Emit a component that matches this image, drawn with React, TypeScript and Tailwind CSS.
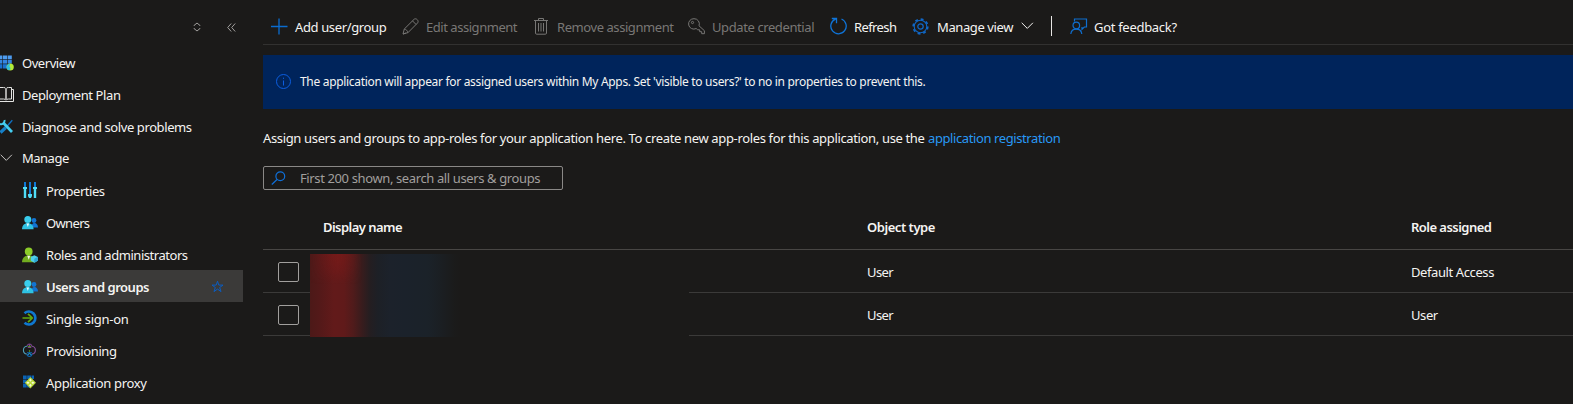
import type { ReactNode } from "react";

type IconProps = { className?: string };

const Grid = () => (
  <svg width="15" height="17" viewBox="0 0 15 17">
    <g fill="#4d9bef">
      <rect x="0" y="1.500" width="2.400" height="3.500" /><rect x="3" y="1.500" width="4" height="3.500" /><rect x="7.600" y="1.500" width="4.200" height="3.500" />
    </g>
    <g fill="#3486e2">
      <rect x="0" y="5.600" width="2.400" height="4" /><rect x="3" y="5.600" width="4" height="4" /><rect x="7.600" y="5.600" width="4.200" height="4" />
    </g>
    <g fill="#1a70cf">
      <rect x="0" y="10.200" width="2.400" height="4.300" /><rect x="3" y="10.200" width="4" height="4.300" />
    </g>
    <circle cx="10.2" cy="13" r="3.600" fill="#b4ec36" />
    <path d="M9.8 9.400a3.600 3.600 0 0 0-1 6.900c2.200-.8 2-2.500 1-3.400-.9-1.200.8-2 0-3.500Z" fill="#32bedd" />
  </svg>
);
const Book = () => (
  <svg width="15" height="18" viewBox="0 0 15 18" fill="none" stroke="#e4e4e2">
    <path d="M0 2.500h3.500q2 0 2.500 1.200Q6.500 2.500 8.500 2.500h3v11.500h-3q-2 0-2.500 1.200Q5.500 14 3.500 14H0" />
    <path d="M6 3.500V15" stroke="#a9a8a6" strokeWidth="2" />
    <path d="M11.500 4.500h2v12H0" />
  </svg>
);
const Tools = () => (
  <svg width="15" height="17" viewBox="0 0 15 17" fill="none">
    <path d="M12.300 2.200 7 8.200" stroke="#0f6fc0" strokeWidth="1.300" />
    <path d="M5.800 9.500.5 14.500" stroke="#1680c8" strokeWidth="3.200" />
    <path d="M3 4.500 12 14" stroke="#45cdf0" strokeWidth="2.700" />
    <path d="M0 6c2 .8 5-1 4.500-4" stroke="#45cdf0" strokeWidth="1.900" />
  </svg>
);
const Chevron = ({ className }: IconProps) => (
  <svg className={className} width="13" height="8" viewBox="0 0 13 8" fill="none" stroke="currentColor"><path d="m.7.800 5.600 5.600L11.900.800" /></svg>
);
const Sliders = () => (
  <svg width="16" height="18" viewBox="0 0 16 18">
    <path d="M2 1h2v6H2zM7 1h2v13H7zM12 1h2v6h-2z" fill="#0f78d4" />
    <path d="M1 6h4v2H4.200V17H1.800V8H1zM6 13h4v2L9 17H7l-1-2zM11 6h4v2h-.800V17h-2.400V8H11z" fill="#50dcf5" />
  </svg>
);
const People = () => (
  <svg width="16" height="16" viewBox="0 0 16 16">
    <circle cx="12" cy="6.500" r="2.400" fill="#1274d2" /><path d="M9 13.500c0-6 7-6 7 0Z" fill="#1274d2" />
    <path d="M0 15.300c0-8.500 11.600-8.500 11.600 0Z" fill="#2fc2e3" /><circle cx="5.800" cy="5.400" r="3.500" fill="#39cdec" />
    <path d="m4.500 9.600 1.300 3.400 1.300-3.400Z" fill="#e8fafd" />
  </svg>
);
const Admin = () => (
  <svg width="16" height="17" viewBox="0 0 16 17">
    <path d="M0 16.300c0-9.500 13.500-9.500 13.500 0Z" fill="#72ad20" /><circle cx="6.700" cy="5.500" r="3.900" fill="#8ccb29" />
    <path d="m5.200 9.800 1.500 4 1.500-4Z" fill="#f2f8e8" />
    <path d="m12.300 9.200 3.500 1.700v3.800l-3.500 2-3.500-2v-3.800Z" fill="#50cfe8" /><path d="m12.300 12.800 3.500-1.900v3.800l-3.500 2Z" fill="#2ba6d4" />
  </svg>
);
const SignOn = () => (
  <svg width="16" height="18" viewBox="0 0 16 18" fill="none">
    <path d="M2.500 4.200A6.500 6.500 0 1 1 2.500 13.800" stroke="#0f78d0" strokeWidth="2.600" />
    <path d="M.5 9h9.500M6 4.800 10.300 9 6 13.200" stroke="#62aa0c" strokeWidth="1.700" />
  </svg>
);
const Provision = () => (
  <svg width="16" height="16" viewBox="0 0 16 16" fill="none" strokeWidth="1.100">
    <path d="M5.300 4.200H4.800C.3 4.800.3 11.500 4.800 12" stroke="#4f9fb8" />
    <path d="M9.700 4.200h.300c4.500.6 4.500 7.300 0 7.800" stroke="#85509c" />
    <path d="M5.300 4.200c-.300-2.800 4.700-2.800 4.400 0" stroke="#76408c" />
    <path d="M4.800 12c.6 3.300 4.800 3.300 5.200 0M5 10.800h5" stroke="#0d66b0" />
    <path d="M7.500 2v2.800M5.800 5.500h3.500" stroke="#7a3e8a" /><path d="M6.200 4.400h2.600M7.500 8.300v1.500" stroke="#58a01a" /><path d="m5.700 13 1.800-1.800L9.300 13" stroke="#1c86c6" />
  </svg>
);
const Proxy = () => (
  <svg width="16" height="16" viewBox="0 0 16 16">
    <path d="M1 1.500h3.700v3.600H1zM5.200 1.500H9v3.600H5.200zM1 5.600h3.700V9.200H1zM1 9.700h3.700v3.800H1zM9.500 1.500H12v3.600H9.500zM5.200 9.700H9v3.800H5.200z" fill="#0b63b4" />
    <path d="m8.400 2.900 5.600 5.800-5.600 5.800-5.600-5.800Z" fill="#b6d738" />
    <path d="m8.400 4.500 1.300 1.700-1.300 1.500-1.300-1.500ZM8.400 9.700l1.300 1.500-1.300 1.700-1.300-1.700ZM4.300 8.700l1.700-1.300 1.500 1.300L6 10ZM9.300 8.700l1.500-1.300 1.700 1.300-1.700 1.300Z" fill="#f4fbd4" />
  </svg>
);
const Plus = () => (
  <svg width="17" height="17" viewBox="0 0 17 17" stroke="#0a6cd0" strokeWidth="1.300"><path d="M8 .5v16M0 8.500h16.500" /></svg>
);
const Pencil = () => (
  <svg width="17" height="17" viewBox="0 0 17 17" fill="none" stroke="#777674">
    <path d="m1 16 1.300-5L12 1.400c2-2 5.500 1.500 3.500 3.600L6 14.600ZM2.300 11c1.700.3 3.300 1.800 3.700 3.600M10.500 2.900l3.600 3.600M1 16l3-1" />
  </svg>
);
const Trash = () => (
  <svg width="14" height="17" viewBox="0 0 14 17" fill="none" stroke="#777674">
    <path d="M0 2.500h14M4.500 2.500v-2h5v2M1.500 2.500V15q0 1.200 1.200 1.200h8.600q1.200 0 1.200-1.200V2.500M4.500 5v8.500M7 5v8.500M9.500 5v8.500" />
  </svg>
);
const Key = () => (
  <svg width="17" height="17" viewBox="0 0 17 17" fill="none" stroke="#777674">
    <path d="M6 .7a5.200 5.200 0 1 0 2.200 9.800l1.500 1.300h2v1.900h2v2h2.700v-3L11 7.800A5.200 5.200 0 0 0 6 .7Z" /><circle cx="4.500" cy="4.500" r="1.100" />
  </svg>
);
const Refresh = () => (
  <svg width="17" height="18" viewBox="0 0 17 18" fill="none" stroke="#0f74d8" strokeWidth="1.300">
    <path d="M11.500 2A7.700 7.700 0 1 1 5.300 2.100L6.200 1.800M1.800 1.500h4.700v4.700" />
  </svg>
);
const Gear = () => (
  <svg width="17" height="17" viewBox="0 0 17 17" fill="none" stroke="#1068c8">
    <circle cx="8.500" cy="8.500" r="7.300" strokeWidth="1.700" strokeDasharray="2.870 2.860" />
    <circle cx="8.500" cy="8.500" r="6.300" strokeWidth="1.100" />
    <circle cx="8.500" cy="8.500" r="2.700" strokeWidth="1.200" />
  </svg>
);
const Feedback = () => (
  <svg width="18" height="17" viewBox="0 0 18 17" fill="none" stroke="#0f6fd0" strokeWidth="1.200">
    <path d="M4.500 3.500V1h12v8h-2.200l-2.300 2.300V9M.8 16c.7-6.500 10.200-6.500 11 0" /><circle cx="6.300" cy="7.500" r="3.300" />
  </svg>
);
const Info = () => (
  <svg width="16" height="16" viewBox="0 0 16 16" fill="none" stroke="#0c5ee0"><circle cx="7.500" cy="7.500" r="7" /><path d="M7.500 6.500V11.500M7.500 3.700v1.200" /></svg>
);
const Magnifier = () => (
  <svg width="15" height="14" viewBox="0 0 15 14" fill="none" stroke="#0f6fd8" strokeWidth="1.200"><circle cx="9.300" cy="5.200" r="4.400" /><path d="M6 8.500.8 13.500" /></svg>
);
const Star = () => (
  <svg width="13" height="13" viewBox="0 0 13 13" fill="none" stroke="#0b5cc0"><path d="m6.500 1.200 1.300 3.900H12L8.700 7.500l1.300 4.100-3.500-2.500L3 11.600l1.300-4.100L1 5.100h4.200Z" /></svg>
);

type NavProps = { icon: ReactNode; label: string; tracking: string; sub?: boolean; active?: boolean; up?: boolean };
const NavItem = ({ icon, label, tracking, sub, active, up }: NavProps) => (
  <div className={`flex h-8 w-[243px] shrink-0 items-center ${active ? "bg-[#3b3a39] font-semibold" : ""}`}>
    <span className={`flex items-center ${sub ? "w-[46px] pl-[22px]" : "w-[22px]"}`}>{icon}</span>
    <span className={`grow whitespace-nowrap ${up ? "" : "pt-px"} ${tracking}`}>{label}</span>
    {active && <span className="mr-[19px]"><Star /></span>}
  </div>
);

type CommandProps = { icon: ReactNode; label: string; width: string; iconWidth: string; tracking: string; disabled?: boolean; menu?: boolean };
const Command = ({ icon, label, width, iconWidth, tracking, disabled, menu }: CommandProps) => (
  <div className={`flex shrink-0 items-center ${width} ${disabled ? "text-[#797775]" : ""}`}>
    <span className={`shrink-0 ${iconWidth}`}>{icon}</span>
    <span className={`whitespace-nowrap pt-px ${tracking}`}>{label}</span>
    {menu && <Chevron className="ml-2" />}
  </div>
);

const rows = [
  { type: "User", role: "Default Access" },
  { type: "User", role: "User" },
];

export default function App() {
  return (
    <div className="flex h-[404px] w-[1573px] overflow-hidden bg-[#1b1a19] font-['Noto_Sans','Open_Sans',sans-serif] text-[13px] leading-[18px] text-[#f5f4f2]">
      <nav className="flex w-[263px] shrink-0 flex-col">
        <div className="flex h-[46px] shrink-0 items-center pt-2 text-[#a19f9d]">
          <svg className="ml-[193px]" width="8" height="10" viewBox="0 0 8 10" fill="none" stroke="currentColor"><path d="M1 4V3.500L4 1l3 2.500V4M1 6v.5L4 9l3-2.500V6" /></svg>
          <svg className="ml-[26px]" width="9" height="9" viewBox="0 0 9 9" fill="none" stroke="currentColor"><path d="M4.200.5.700 4.500l3.500 4M8.200.5 4.700 4.500l3.500 4" /></svg>
        </div>
        <NavItem icon={<Grid />} label="Overview" tracking="tracking-[-0.45px]" />
        <NavItem icon={<Book />} label="Deployment Plan" tracking="tracking-[-0.4px]" />
        <NavItem icon={<Tools />} label="Diagnose and solve problems" tracking="tracking-[-0.4px]" />
        <NavItem icon={<Chevron className="text-[#c8c6c4]" />} label="Manage" tracking="tracking-[-0.5px]" up />
        <NavItem sub icon={<Sliders />} label="Properties" tracking="tracking-[-0.45px]" />
        <NavItem sub icon={<People />} label="Owners" tracking="tracking-[-0.65px]" />
        <NavItem sub icon={<Admin />} label="Roles and administrators" tracking="tracking-[-0.46px]" />
        <NavItem sub active icon={<People />} label="Users and groups" tracking="tracking-[-0.5px]" />
        <NavItem sub icon={<SignOn />} label="Single sign-on" tracking="tracking-[-0.27px]" />
        <NavItem sub icon={<Provision />} label="Provisioning" tracking="tracking-[-0.4px]" />
        <NavItem sub icon={<Proxy />} label="Application proxy" tracking="tracking-[-0.32px]" />
      </nav>
      <main className="flex grow flex-col">
        <div className="flex h-[45px] shrink-0 items-center border-b border-[#323130] pt-2 pl-2">
          <Command icon={<Plus />} label="Add user/group" width="w-[131px]" iconWidth="w-6" tracking="tracking-[-0.37px]" />
          <Command icon={<Pencil />} label="Edit assignment" width="w-[132px]" iconWidth="w-6" tracking="tracking-[-0.46px]" disabled />
          <Command icon={<Trash />} label="Remove assignment" width="w-[154px]" iconWidth="w-[23px]" tracking="tracking-[-0.43px]" disabled />
          <Command icon={<Key />} label="Update credential" width="w-[142px]" iconWidth="w-[24px]" tracking="tracking-[-0.4px]" disabled />
          <Command icon={<Refresh />} label="Refresh" width="w-[82px]" iconWidth="w-[24px]" tracking="tracking-[-0.6px]" />
          <Command icon={<Gear />} label="Manage view" width="w-[139px]" iconWidth="w-[25px]" tracking="tracking-[-0.4px]" menu />
          <span className="mr-[18px] h-5 w-px bg-[#e8e6e4]" />
          <Command icon={<Feedback />} label="Got feedback?" width="w-[120px]" iconWidth="w-6" tracking="tracking-[-0.3px]" />
        </div>
        <div className="mt-[10px] flex h-[54px] shrink-0 items-center bg-[#00245b] pl-[13px] text-[12px]">
          <Info />
          <span className="ml-2 whitespace-nowrap tracking-[-0.316px]">The application will appear for assigned users within My Apps. Set 'visible to users?' to no in properties to prevent this.</span>
        </div>
        <p className="mt-[20px] flex h-[18px] shrink-0 whitespace-nowrap">
          <span className="w-[665px] tracking-[-0.35px]">Assign users and groups to app-roles for your application here. To create new app-roles for this application, use the</span>
          <a className="tracking-[-0.4px] text-[#2899f5]">application registration</a>
        </p>
        <div className="mt-[19px] flex h-6 w-[300px] shrink-0 items-center rounded-[2px] border border-[#8a8886] pl-[7px] text-[#a19f9d]">
          <span className="w-[29px]"><Magnifier /></span>
          <span className="whitespace-nowrap tracking-[-0.38px]">First 200 shown, search all users &amp; groups</span>
        </div>
        <div className="relative mt-[15px]">
          <div className="grid h-[45px] grid-cols-[60px_544px_544px_1fr] items-center border-b border-[#484644] font-semibold">
            <span />
            <span className="tracking-[-0.54px]">Display name</span>
            <span className="tracking-[-0.46px]">Object type</span>
            <span className="tracking-[-0.54px]">Role assigned</span>
          </div>
          {rows.map((row, i) => (
            <div key={i} className="grid h-[43px] grid-cols-[60px_544px_544px_1fr] items-center border-b border-[#3b3a39]">
              <span className="mt-px ml-[15px] h-5 w-[21px] rounded-[2px] border border-[#a19f9d]" />
              <span />
              <span className="pt-px tracking-[-0.6px]">{row.type}</span>
              <span className="pt-px tracking-[-0.4px]">{row.role}</span>
            </div>
          ))}
          <div className="absolute top-[49px] left-[47px] h-[84px] w-[379px] bg-[#1b1a19]">
            <div className="h-[83px] w-[150px] bg-[linear-gradient(90deg,#4c1918_0px,#541919_10px,#621a1a_24px,#601a1a_34px,#501b1b_43px,#381c1d_52px,#241e21_60px,#1d2026_68px,#1c222b_80px,#1b222b_95px,#1b2229_118px,#1b1f23_130px,#1b1b1b_144px,#1b1a19_150px)]">
              <div className="h-full w-full bg-[linear-gradient(180deg,#801a19aa_0px,#801a1966_15px,#00000000_30px)] [mask-image:linear-gradient(90deg,transparent_0px,black_28px,transparent_52px)]" />
            </div>
          </div>
        </div>
      </main>
    </div>
  );
}
